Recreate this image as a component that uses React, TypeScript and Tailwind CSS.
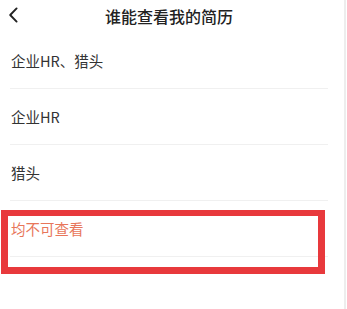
export default function App() {
  const options = ["企业HR、猎头", "企业HR", "猎头", "均不可查看"];

  return (
    <div
      className="relative w-[347px] h-[309px] overflow-hidden bg-white"
      style={{ fontFamily: '"Noto Sans CJK SC", "Noto Sans", sans-serif' }}
    >
      {/* Header */}
      <div className="relative flex h-[31px] items-center justify-center pr-[9px]">
        <svg
          className="absolute left-[8px] top-[7px]"
          width="11"
          height="16"
          viewBox="0 0 11 16"
          fill="none"
        >
          <path d="M8.6 1.4 L2.2 8 L8.6 14.6" stroke="#222" strokeWidth="1.9" strokeLinecap="round" strokeLinejoin="round" />
        </svg>
        <h1 className="text-[16px] font-medium text-[#222]">谁能查看我的简历</h1>
      </div>

      {/* Options */}
      <ul className="mt-[2px] pl-[10px] pr-[19px]">
        {options.map((label, i) => (
          <li
            key={label}
            className="flex h-[56px] items-center border-b border-[#f0f0f0]"
          >
            <span
              className={
                "pl-[1px] text-[14.5px] " +
                (i === options.length - 1 ? "text-[#e8765a]" : "text-[#333]")
              }
            >
              {label}
            </span>
          </li>
        ))}
      </ul>

      {/* Scroll edge */}
      <div className="absolute right-[1px] top-0 h-full w-[2px] bg-[#ededed]" />

      {/* Annotation box */}
      <div className="absolute left-[1px] top-[210px] h-[64px] w-[324px] border-[7px] border-t-[6px] border-[#e8393c]" />
    </div>
  );
}
